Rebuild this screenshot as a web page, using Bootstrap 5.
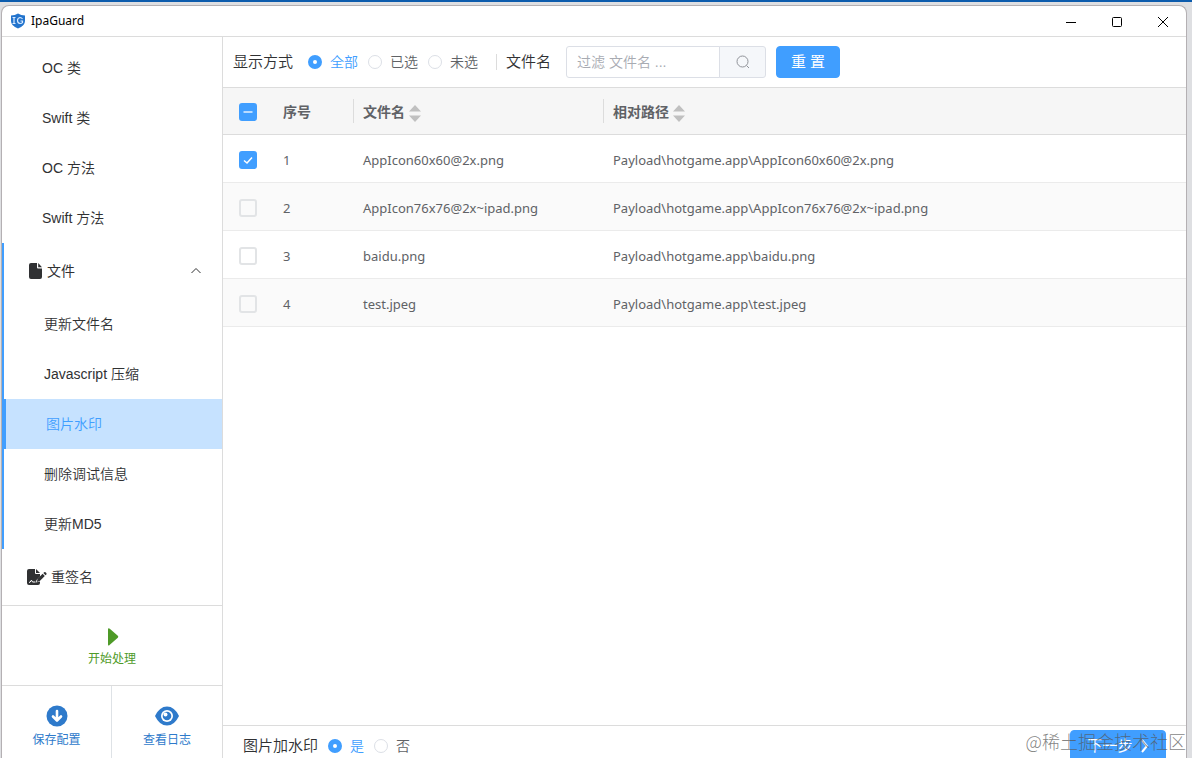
<!DOCTYPE html>
<html lang="zh-CN">
<head>
<meta charset="utf-8">
<meta name="viewport" content="width=device-width, initial-scale=1">
<title>IpaGuard</title>
<link href="https://cdn.jsdelivr.net/npm/bootstrap@5.3.0/dist/css/bootstrap.min.css" rel="stylesheet">
<style>
  :root { --accent: #409eff; --line: #dcdcdc; --ink: #303133; --muted: #606266; }
  body {
    font-family: "Liberation Sans", "Noto Sans CJK SC", sans-serif;
    font-size: 14px; line-height: 20px; color: var(--ink); font-weight: 350;
    background: #dedfe2; border-top: 2px solid #0c5cad;
  }
  .app-window { margin: 3px 5px 0 1px; border: 1px solid #b4b0b3; border-bottom: 0; border-radius: 8px 8px 0 0; background: #fff; }
  .title-bar { height: 31px; border-bottom: 1px solid var(--line); font-family: "Noto Sans", sans-serif; font-weight: 400; font-size: 12px; color: #000; }
  .title-bar button { width: 46px; height: 30px; }
  .app-name { margin-left: 5px; }
  .plain-btn { border: 0; background: none; padding: 0; color: inherit; }
  .side { width: 221px; border-right: 1px solid var(--line); }
  .side a { color: var(--ink); text-decoration: none; display: flex; align-items: center; height: 50px; padding-left: 40px; }
  .side a.top-item, .group-head { height: 56px; }
  .side a.top-item { padding-left: 25px; }
  .group-head { width: 100%; padding: 0 20px 0 25px; }
  .group { border-left: 2px solid var(--accent); }
  .side a.current { background: #c6e2ff; color: var(--accent); border-left: 2px solid var(--accent); }
  .tile { font-size: 12px; line-height: 16px; color: #2e7acb; height: 72px; padding-top: 18px; }
  .tile-run { color: #4e9a28; height: 81px; padding-top: 21px; border-top: 1px solid var(--line); border-bottom: 1px solid var(--line); }
  .lead-label { font-size: 15px; }
  .tool-bar { height: 51px; padding-left: 10px; border-bottom: 1px solid var(--line); }
  .pick { display: flex; align-items: center; gap: 8px; margin-right: 10px; color: var(--muted); }
  .pick:has(input:checked) { color: var(--accent); }
  .pick .form-check-input { width: 14px; height: 14px; border: 1px solid #dcdfe6; margin: 0; flex: none; }
  .pick .form-check-input:checked { border: 5px solid var(--accent); background: #fff none; }
  .show-label { margin-right: 15px; }
  .mark-label { margin-right: 10px; }
  .divider { width: 1px; height: 16px; background: var(--line); margin: 0 9px 0 8px; }
  .filter { width: 200px; height: 32px; margin: 0 10px 0 15px; }
  .filter .form-control { font-size: 14px; line-height: 20px; padding: 5px 10px; border-color: #dcdfe6; border-radius: 3px; font-weight: 350; }
  .filter .form-control::placeholder { color: #a8abb2; }
  .filter .btn { width: 47px; padding: 0; border: 1px solid #dcdfe6; background: #f5f7fa; border-radius: 3px; }
  .btn-main { background: var(--accent); border-color: var(--accent); color: #fff; border-radius: 4px; width: 64px; height: 32px; padding: 0; font-size: 15px; line-height: 20px; }
  .btn-next { width: 96px; }
  .files { font-family: "Noto Sans", "Noto Sans CJK SC", sans-serif; font-weight: 400; table-layout: fixed; margin: 0; font-size: 13px; }
  .files th, .files td { height: 48px; padding: 2px 10px 0; vertical-align: middle; border-bottom: 1px solid #ebebeb; color: var(--muted); box-shadow: none; background: #fff; }
  .files thead th { height: 47px; background: #f6f6f6; border-color: var(--line); font-size: 14px; font-weight: 700; position: relative; }
  .files > :not(caption) > * > * { border-top-width: 0; }
  .files { border-collapse: separate; border-spacing: 0; }
  .files tbody tr:nth-child(even) td { background: #fafafa; }
  .files th.split::before { content: ""; position: absolute; left: 0; top: 11px; bottom: 11px; width: 1px; background: var(--line); }
  .files .form-check-input { width: 18px; height: 18px; border: 2px solid #e2e4e6; border-radius: 3px; display: block; margin: 0 0 0 6px; background-color: transparent; }
  .files .form-check-input:checked, .files .form-check-input:indeterminate { background-color: var(--accent); border-color: var(--accent); }
  .files .form-check-input:checked { background-image: url("data:image/svg+xml,%3csvg xmlns='http://www.w3.org/2000/svg' viewBox='0 0 14 14'%3e%3cpath d='M3 7.500l3 2.500 5-5.500' fill='none' stroke='%23fff' stroke-width='1.500'/%3e%3c/svg%3e"); }
  .files .form-check-input:indeterminate { background-image: url("data:image/svg+xml,%3csvg xmlns='http://www.w3.org/2000/svg' viewBox='0 0 14 14'%3e%3cpath d='M2.500 7h9' fill='none' stroke='%23b9dbff' stroke-width='2'/%3e%3c/svg%3e"); }
  .foot-bar { height: 33px; border-top: 1px solid var(--line); }
  .foot-inner { height: 40px; padding: 0 20px; }
  .stamp { position: absolute; right: 6px; bottom: 4px; font-weight: 300; font-family: "Noto Sans CJK SC", sans-serif; font-size: 18px; line-height: 26px; color: #555b; pointer-events: none; }
</style>
</head>
<body class="vh-100 overflow-hidden d-flex flex-column">
<div class="app-window flex-grow-1 d-flex flex-column overflow-hidden">
  <header class="title-bar d-flex align-items-center flex-shrink-0">
    <svg class="ms-2" width="16" height="16" viewBox="0 0 16 16" aria-hidden="true"><path d="M1 2.500Q5 2.500 8 .5q3 2 7 2V8q0 5-7 7.500Q1 13 1 8z" fill="#2374cd"/><path d="M2.500 4.500h3M4 4.500v6M2.500 10.500h3M12.500 6Q11.500 4.500 10 4.500 7.500 5 7.500 7.500T10 10.500q2 0 2.500-1V8h-2" fill="none" stroke="#d9eaff" stroke-width="1.200"/></svg>
    <span class="app-name me-auto">IpaGuard</span>
    <button class="plain-btn" aria-label="最小化"><svg width="12" height="12"><path d="M1 6.500h10" stroke="#000"/></svg></button>
    <button class="plain-btn" aria-label="最大化"><svg width="12" height="12"><rect x="1.500" y="1.500" width="9" height="9" rx="1" fill="none" stroke="#000"/></svg></button>
    <button class="plain-btn" aria-label="关闭"><svg width="12" height="12"><path d="M1 1l10 10M11 1L1 11" stroke="#000" fill="none"/></svg></button>
  </header>

  <div class="d-flex flex-grow-1 overflow-hidden">
    <aside class="side d-flex flex-column flex-shrink-0">
      <nav class="flex-grow-1 overflow-hidden d-flex flex-column justify-content-end">
        <a href="#">OC 类</a>
        <a href="#">Swift 类</a>
        <a href="#">OC 方法</a>
        <a href="#">Swift 方法</a>
        <div class="group">
          <button class="plain-btn group-head d-flex align-items-center">
            <svg class="me-1" width="14" height="16" viewBox="0 0 14 16" fill="#303133"><path d="M2 0h6v4.500q0 1 1 1h4V14q0 2-2 2H2q-2 0-2-2V2q0-2 2-2zM9.200 0L13 4.300H9.200z"/></svg>
            <span>文件</span>
            <svg class="ms-auto" width="12" height="12" viewBox="0 0 12 12"><path d="M1.500 8L6 3.500 10.500 8" fill="none" stroke="#303133"/></svg>
          </button>
          <a href="#">更新文件名</a>
          <a href="#">Javascript 压缩</a>
          <a href="#" class="current" aria-current="page">图片水印</a>
          <a href="#">删除调试信息</a>
          <a href="#">更新MD5</a>
        </div>
        <a href="#" class="top-item">
          <svg class="me-1" width="20" height="16" viewBox="0 0 20 16"><path d="M2 0h6v4q0 1 1 1h4v2.500L9.500 11l-.6 2.500L13 12.500V14q0 2-2 2H2q-2 0-2-2V2Q0 0 2 0zM9 0l4 4H9z" fill="#303133"/><path d="M2 13.500q1.500 0 2-2 1-.5 1.500 1.500h3" fill="none" stroke="#fff"/><path d="M9.800 13l.8-3.200 5-5 2.200 2.200-5 5zM16.300 4.100l.9-.9q.7-.5 1.300.1l.8.8q.6.600.1 1.300l-.9.900z" fill="#303133"/></svg>
          重签名</a>
      </nav>
      <button class="plain-btn tile tile-run d-flex flex-column align-items-center flex-shrink-0">
        <svg class="mb-1" width="14" height="20" viewBox="0 0 14 20"><path d="M3 2.500Q3 .5 4.800 1.700l8 7q1 1 0 2l-8 7Q3 19.500 3 17.500z" fill="#4e9a28"/></svg>
        开始处理</button>
      <div class="d-flex flex-shrink-0">
        <button class="plain-btn tile w-50 d-flex flex-column align-items-center border-end">
          <svg class="mb-1" width="24" height="24" viewBox="0 0 24 24"><circle cx="12" cy="12" r="10.500" fill="#2e7acb"/><path d="M12 7v9M8 12.500l4 4 4-4" fill="none" stroke="#fff" stroke-width="2.600" stroke-linecap="round" stroke-linejoin="round"/></svg>
          保存配置</button>
        <button class="plain-btn tile w-50 d-flex flex-column align-items-center">
          <svg class="mb-1" width="24" height="24" viewBox="0 0 24 24"><path d="M0 12Q4.500 2.500 12 2.500T24 12Q19.500 21.500 12 21.500T0 12z" fill="#2e7acb"/><circle cx="12" cy="12" r="6" fill="#fff"/><circle cx="12" cy="12" r="4.300" fill="#2e7acb"/><circle cx="10.500" cy="10.500" r="2" fill="#fff"/></svg>
          查看日志</button>
      </div>
    </aside>

    <main class="flex-grow-1 d-flex flex-column overflow-hidden">
      <form class="tool-bar d-flex align-items-center flex-shrink-0">
        <span class="lead-label show-label">显示方式</span>
        <label class="pick"><input class="form-check-input" type="radio" name="show" checked>全部</label>
        <label class="pick"><input class="form-check-input" type="radio" name="show">已选</label>
        <label class="pick"><input class="form-check-input" type="radio" name="show">未选</label>
        <span class="divider"></span>
        <label class="lead-label" for="filter">文件名</label>
        <div class="input-group flex-nowrap filter">
          <input id="filter" class="form-control" type="text" placeholder="过滤 文件名 ...">
          <button class="btn d-flex align-items-center justify-content-center" type="button" aria-label="搜索"><svg width="14" height="14" viewBox="0 0 14 14" fill="none" stroke="#909399"><circle cx="6.500" cy="6.500" r="5.500"/><path d="M10.500 10.500l2.500 2.500"/></svg></button>
        </div>
        <button class="btn btn-main" type="reset">重 置</button>
      </form>

      <div class="flex-grow-1 overflow-hidden">
        <table class="table files">
          <colgroup><col style="width:50px"><col style="width:80px"><col style="width:250px"><col></colgroup>
          <thead>
            <tr>
              <th><input id="all" class="form-check-input" type="checkbox" aria-label="全选"></th>
              <th>序号</th>
              <th class="split">文件名 <svg width="12" height="18" viewBox="0 0 12 18" fill="#c0c0c0"><path d="M0 7.500L6 1l6 6.500zM0 11.500h12L6 18z"/></svg></th>
              <th class="split">相对路径 <svg width="12" height="18" viewBox="0 0 12 18" fill="#c0c0c0"><path d="M0 7.500L6 1l6 6.500zM0 11.500h12L6 18z"/></svg></th>
            </tr>
          </thead>
          <tbody>
            <tr><td><input class="form-check-input" type="checkbox" aria-label="1" checked></td><td>1</td><td>AppIcon60x60@2x.png</td><td>Payload\hotgame.app\AppIcon60x60@2x.png</td></tr>
            <tr><td><input class="form-check-input" type="checkbox" aria-label="2"></td><td>2</td><td>AppIcon76x76@2x~ipad.png</td><td>Payload\hotgame.app\AppIcon76x76@2x~ipad.png</td></tr>
            <tr><td><input class="form-check-input" type="checkbox" aria-label="3"></td><td>3</td><td>baidu.png</td><td>Payload\hotgame.app\baidu.png</td></tr>
            <tr><td><input class="form-check-input" type="checkbox" aria-label="4"></td><td>4</td><td>test.jpeg</td><td>Payload\hotgame.app\test.jpeg</td></tr>
          </tbody>
        </table>
      </div>

      <footer class="foot-bar flex-shrink-0 overflow-hidden">
        <div class="foot-inner d-flex align-items-center">
          <span class="lead-label mark-label">图片加水印</span>
          <label class="pick"><input class="form-check-input" type="radio" name="mark" checked>是</label>
          <label class="pick"><input class="form-check-input" type="radio" name="mark">否</label>
          <button class="btn btn-main btn-next ms-auto d-flex align-items-center justify-content-center gap-2" type="button">下一步<svg width="8" height="14" viewBox="0 0 8 14"><path d="M1 1l5 6-5 6" fill="none" stroke="#fff" stroke-width="2"/></svg></button>
        </div>
      </footer>
    </main>
  </div>
</div>
<div class="stamp">@稀土掘金技术社区</div>
<script src="https://cdn.jsdelivr.net/npm/bootstrap@5.3.0/dist/js/bootstrap.bundle.min.js"></script>
<script>document.getElementById('all').indeterminate = true;</script>
</body>
</html>
